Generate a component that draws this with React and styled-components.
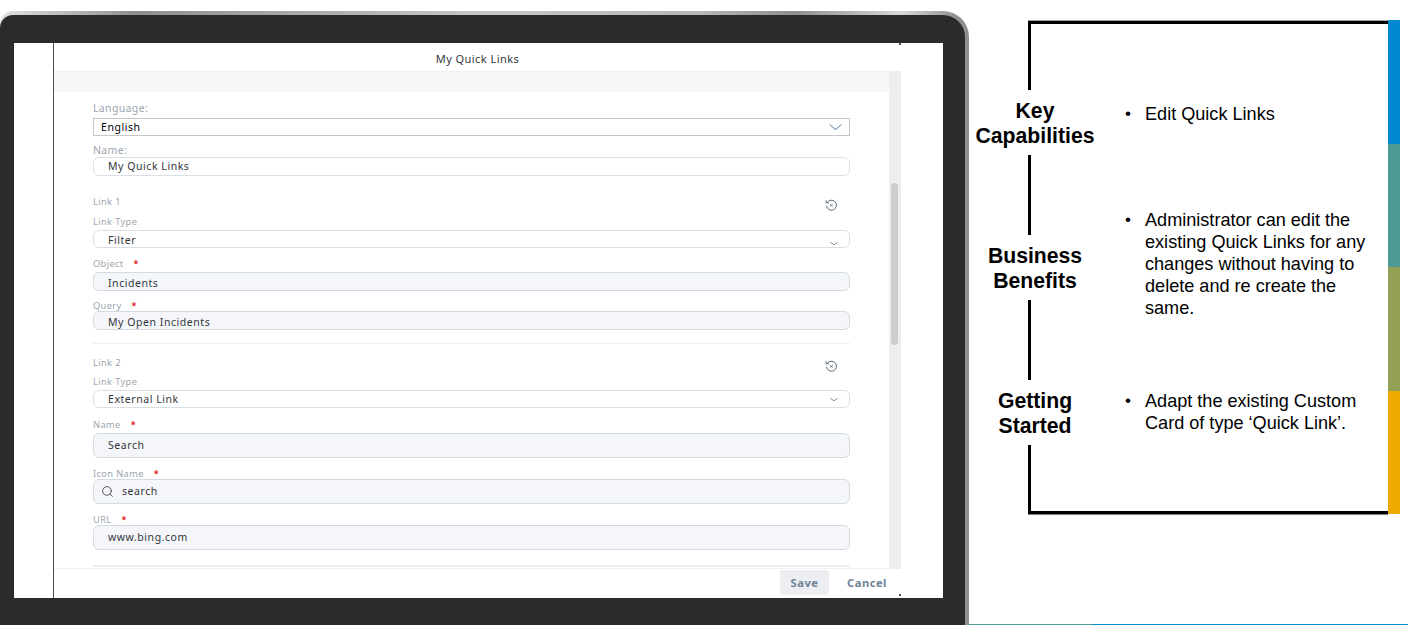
import React from 'react';
import styled, { createGlobalStyle } from 'styled-components';
import { Search } from 'lucide-react';

const GlobalStyle = createGlobalStyle`
  html, body {
    margin: 0;
    padding: 0;
    background: #fff;
    overflow: hidden;
  }
`;

const Page = styled.div`
  display: flex;
  width: 1408px;
  height: 625px;
  overflow: hidden;
`;

const Laptop = styled.div`
  flex: none;
  box-sizing: border-box;
  width: 969px;
  height: 614px;
  margin-top: 11px;
  padding: 4px 4px 0 0;
  border-radius: 13px 26px 0 0;
  background: linear-gradient(90deg, #e2e2e2 0%, #8f8f8f 14%, #c8c8c8 50%, #b8b8b8 72%, #8e8e8e 82%, #d8d8d8 93%, #8e8e92 99%);
`;

const Bezel = styled.div`
  box-sizing: border-box;
  height: 100%;
  padding: 28px 22px 27px 14px;
  background: #2b2b2b;
  border-radius: 13px 22px 0 0;
`;

const Screen = styled.div`
  box-sizing: border-box;
  height: 100%;
  padding: 0 42px 0 39px;
  background: #fff;
`;

const Dialog = styled.div`
  position: relative;
  display: flex;
  flex-direction: column;
  height: 100%;
  border-left: 1px solid #4a4f55;
  font-family: "Noto Sans", sans-serif;

  &::before,
  &::after {
    content: '';
    position: absolute;
    right: 0;
    width: 2px;
    height: 2px;
    background: #4a5a66;
  }
  &::before {
    top: 0;
  }
  &::after {
    bottom: 2px;
  }
`;

const DialogTitle = styled.div`
  flex: none;
  height: 29px;
  line-height: 32px;
  text-align: center;
  font-size: 11px;
  letter-spacing: 0.45px;
  color: #32363a;
  border-bottom: 1px solid #eeeff0;
  box-sizing: border-box;
`;

const Scroller = styled.div`
  flex: 1;
  min-height: 0;
  display: flex;
`;

const Form = styled.div`
  flex: 1;
  min-width: 0;
`;

const Band = styled.div`
  height: 20px;
  background: #f7f7f7;
`;

const Fields = styled.div`
  padding: 0 39px;
`;

const Scrollbar = styled.div`
  flex: none;
  box-sizing: border-box;
  width: 12px;
  padding: 111px 3px 0 2px;
  background: #eceef0;
`;

const Thumb = styled.div`
  height: 162px;
  border-radius: 4px;
  background: #cdcdcd;
`;

const LabelRow = styled.div`
  display: flex;
  align-items: center;
  height: ${(p) => p.$h}px;
  margin-top: ${(p) => p.$top}px;
  margin-bottom: ${(p) => p.$below || 0}px;
  font-size: ${(p) => (p.$big ? 10.5 : 9.3)}px;
  letter-spacing: 0.35px;
  color: #9ca6af;
  white-space: nowrap;
`;

const Star = styled.span`
  margin-left: ${(p) => p.$gap}px;
  color: #e02020;
  font-size: 9px;
  font-weight: 700;
`;

const Input = styled.div`
  box-sizing: border-box;
  display: flex;
  align-items: ${(p) => (p.$low ? 'flex-end' : 'center')};
  gap: 8px;
  height: ${(p) => p.$h}px;
  padding: 0 ${(p) => p.$padR || 11}px 0 ${(p) => p.$pad || 14}px;
  border: 1px solid ${(p) => (p.$filled ? '#d4dae3' : '#d8e0e3')};
  border-radius: ${(p) => (p.$square ? 0 : 6)}px;
  ${(p) => p.$square && 'border-color: #c4c6c8;'}
  background: ${(p) => (p.$filled ? '#f5f6fa' : '#fff')};
  font-size: 10.5px;
  line-height: 13px;
  letter-spacing: 0.55px;
  color: #32363a;
  white-space: nowrap;
`;

const InputText = styled.span`
  flex: 1;
  ${(p) => p.$black && 'color: #000;'}
`;

const ResetButton = styled.div`
  display: flex;
  justify-content: flex-end;
  align-items: flex-start;
  height: 0;
  padding-right: 12px;

  svg {
    flex: none;
    margin-top: -7px;
  }
`;

const ArrowIcon = styled.svg`
  flex: none;
  align-self: ${(p) => (p.$low ? 'flex-end' : 'center')};
  margin-bottom: ${(p) => (p.$low ? 2 : 0)}px;
`;

const Divider = styled.div`
  height: ${(p) => p.$h || 1}px;
  margin-top: ${(p) => p.$top}px;
  background: #eceef0;
`;

const Footer = styled.div`
  flex: none;
  box-sizing: border-box;
  height: 30px;
  display: flex;
  align-items: flex-start;
  justify-content: flex-end;
  gap: 17px;
  padding: 1px 13px 0 0;
  border-top: 1px solid #eeeff0;
  font-size: 11.2px;
  font-weight: 700;
  letter-spacing: 0.5px;
  color: #6f8298;
`;

const FooterButton = styled.div`
  height: 25px;
  line-height: 25px;
  text-align: center;
  width: ${(p) => p.$w}px;
  border-radius: 3px;
  background: ${(p) => (p.$shaded ? '#eceef1' : 'transparent')};
`;

const Side = styled.div`
  flex: 1;
  box-sizing: border-box;
  height: 625px;
  padding: 20px 8px 0 59px;
  background: linear-gradient(90deg, #4c9a94 0 124px, #0089d2 124px) bottom / 100% 1px no-repeat;
  font-family: "Liberation Sans", Arial, sans-serif;
  color: #000;
`;

const Board = styled.div`
  display: flex;
  height: 494px;
`;

const Frame = styled.div`
  flex: 1;
  box-sizing: border-box;
  height: 493px;
  margin-top: 1px;
  padding-top: 66px;
  border: 3px solid #000;
  border-right: 0;
  box-shadow: 0 -1px 0 #a0a0a0, 0 1px 0 #808080;
  display: flex;
  flex-direction: column;
  gap: 80px;
`;

const Row = styled.div`
  display: flex;
  height: 65px;
  margin-left: -56px;
`;

const RowTitle = styled.div`
  flex: none;
  width: 120px;
  padding-top: 9px;
  box-sizing: border-box;
  background: #fff;
  text-align: center;
  font-size: 21.2px;
  line-height: 24.5px;
  font-weight: 700;
`;

const Bullet = styled.div`
  display: flex;
  margin: ${(p) => p.$top}px 0 0 27px;
  font-size: 18.1px;
  line-height: 22px;
`;

const Dot = styled.span`
  flex: none;
  box-sizing: border-box;
  width: 23px;
  padding-left: 3px;
  font-size: 17px;
`;

const BulletText = styled.div`
  width: 228px;
`;

const ColorBar = styled.div`
  flex: none;
  width: 12px;
  display: flex;
  flex-direction: column;
`;

const ColorStep = styled.div`
  flex: 1;
  background: ${(p) => p.$color};
`;

// the little "reset" clock with the cross inside
const ResetIcon = () => (
  <svg width="13" height="13" viewBox="0 0 13 13" fill="none" stroke="#5b6b7c" strokeWidth="1">
    <path d="M2.2 3.6A5 5 0 1 1 1.5 6.8" />
    <path d="M1.2 1.2v2.6h2.6" />
    <path d="M5.2 5.2l2.4 2.4M7.6 5.2L5.2 7.6" />
  </svg>
);

const Arrow = ({ w, h, color, low }) => (
  <ArrowIcon $low={low} width={w} height={h} viewBox="0 0 12 6" preserveAspectRatio="none" fill="none" stroke={color} strokeWidth="1">
    <path d="M0.5 0.5L6 5.5L11.5 0.5" />
  </ArrowIcon>
);

const Label = ({ h, top, below, big, gap, children }) => (
  <LabelRow $h={h} $top={top} $below={below} $big={big}>
    {children}
    {gap && <Star $gap={gap}>*</Star>}
  </LabelRow>
);

const sideRows = [
  { title: ['Key', 'Capabilities'], top: 13, text: 'Edit Quick Links' },
  {
    title: ['Business', 'Benefits'],
    top: -26,
    text: 'Administrator can edit the existing Quick Links for any changes without having to delete and re create the same.',
  },
  { title: ['Getting', 'Started'], top: 10, text: 'Adapt the existing Custom Card of type ‘Quick Link’.' },
];

export default function App() {
  return (
    <Page>
      <GlobalStyle />
      <Laptop>
        <Bezel>
          <Screen>
            <Dialog>
              <DialogTitle>My Quick Links</DialogTitle>
              <Scroller>
                <Form>
                  <Band />
                  <Fields>
                    <Label h={12} top={10} below={4} big>Language:</Label>
                    <Input $h={18} $square $pad={7} $padR={7}>
                      <InputText $black>English</InputText>
                      <Arrow w={13} h={6} color="#6a8aad" />
                    </Input>
                    <Label h={12} top={8} below={1} big>Name:</Label>
                    <Input $h={19}>
                      <InputText>My Quick Links</InputText>
                    </Input>

                    <Label h={10} top={20}>Link 1</Label>
                    <ResetButton><ResetIcon /></ResetButton>
                    <Label h={18} top={6}>Link Type</Label>
                    <Input $h={18} $low>
                      <InputText>Filter</InputText>
                      <Arrow w={8} h={3} color="#32363a" low />
                    </Input>
                    <Label h={18} top={6} gap={10}>Object</Label>
                    <Input $h={19} $filled $low>
                      <InputText>Incidents</InputText>
                    </Input>
                    <Label h={12} top={8} gap={10}>Query</Label>
                    <Input $h={19} $filled $low>
                      <InputText>My Open Incidents</InputText>
                    </Input>
                    <Divider $top={13} />

                    <Label h={10} top={13}>Link 2</Label>
                    <ResetButton><ResetIcon /></ResetButton>
                    <Label h={17} top={6}>Link Type</Label>
                    <Input $h={18}>
                      <InputText>External Link</InputText>
                      <Arrow w={8} h={3} color="#32363a" />
                    </Input>
                    <Label h={18} top={7} gap={10}>Name</Label>
                    <Input $h={25} $filled>
                      <InputText>Search</InputText>
                    </Input>
                    <Label h={12} top={9} gap={10}>Icon Name</Label>
                    <Input $h={25} $filled $pad={7}>
                      <Search size={13} color="#32363a" strokeWidth={1.5} />
                      <InputText>search</InputText>
                    </Input>
                    <Label h={12} top={9} gap={10}>URL</Label>
                    <Input $h={25} $filled>
                      <InputText>www.bing.com</InputText>
                    </Input>
                    <Divider $top={15} $h={2} />
                  </Fields>
                </Form>
                <Scrollbar><Thumb /></Scrollbar>
              </Scroller>
              <Footer>
                <FooterButton $w={49} $shaded>Save</FooterButton>
                <FooterButton $w={42}>Cancel</FooterButton>
              </Footer>
            </Dialog>
          </Screen>
        </Bezel>
      </Laptop>
      <Side>
        <Board>
          <Frame>
            {sideRows.map((row) => (
              <Row key={row.title[0]}>
                <RowTitle>{row.title[0]}<br />{row.title[1]}</RowTitle>
                <Bullet $top={row.top}>
                  <Dot>•</Dot>
                  <BulletText>{row.text}</BulletText>
                </Bullet>
              </Row>
            ))}
          </Frame>
          <ColorBar>
            <ColorStep $color="#0089d2" />
            <ColorStep $color="#4c9a94" />
            <ColorStep $color="#93a156" />
            <ColorStep $color="#eeaa00" />
          </ColorBar>
        </Board>
      </Side>
    </Page>
  );
}
